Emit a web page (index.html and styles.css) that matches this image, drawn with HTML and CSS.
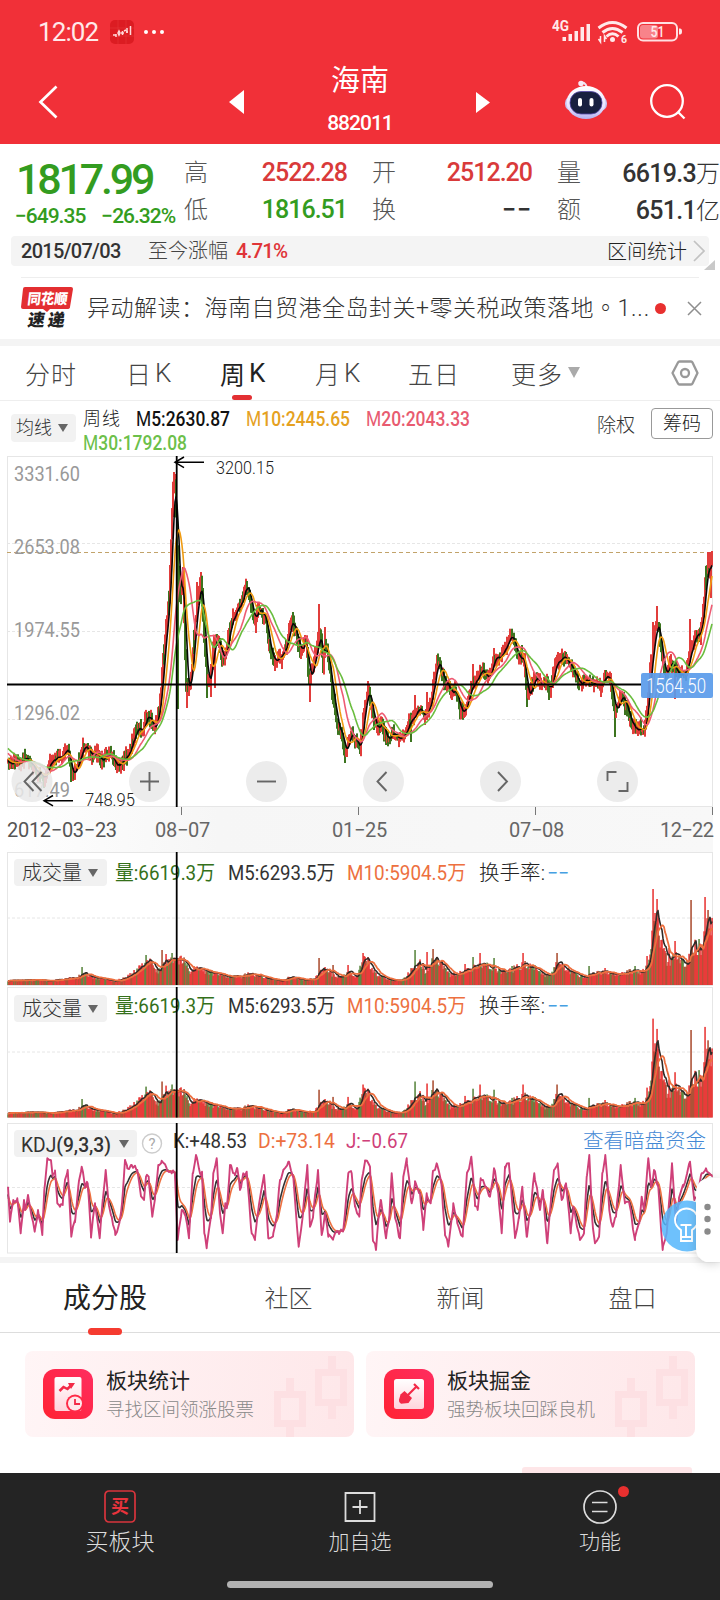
FILE: index.html
```html
<!DOCTYPE html>
<html lang="zh-CN">
<head>
<meta charset="utf-8">
<title>海南 882011</title>
<link rel="stylesheet" href="styles.css">
</head>
<body>
<header class="header">
  <div class="status">
    <span class="clock">12:02</span>
    <svg class="app" width="24" height="24" viewBox="0 0 24 24"><rect width="24" height="24" rx="5" fill="#dc1c22"/><path d="M0 8H24M0 16H24M8 0V24M16 0V24" stroke="#e8363a" stroke-width=".6"/><path d="M3 15h3M6 14v3M8 13l1-2 1 2-1 2zM11 13h3M12.500 11v4M14 11l2-1M17 8v5M16 12h2M20.500 6v9" stroke="#ffd9d9" stroke-width="1.500" fill="none"/></svg>
    <svg width="22" height="6" viewBox="0 0 22 6" fill="#fff"><circle cx="3" cy="3" r="2"/><circle cx="11" cy="3" r="2"/><circle cx="19" cy="3" r="2"/></svg>
    <svg class="signals" width="132" height="26" viewBox="0 0 132 26" fill="#ffe9ea">
      <text class="num" x="0" y="12" font-size="14" font-weight="700" textLength="17" lengthAdjust="spacingAndGlyphs">4G</text>
      <rect x="10.500" y="18" width="3.500" height="4"/><rect x="16.500" y="15" width="3.500" height="7"/><rect x="22.500" y="12" width="3.500" height="10"/><rect x="28.500" y="8" width="3.500" height="14"/><rect x="34.500" y="5" width="3.500" height="17"/>
      <g fill="none" stroke="#ffe9ea" stroke-width="3"><path d="M46.500 9Q60.500-2 74.500 9"/><path d="M50.500 13.500Q60.500 5.500 70.500 13.500"/><path d="M54.500 17.500Q60.500 12 66.500 17.500"/></g>
      <circle cx="60.500" cy="20.500" r="2.500"/><path d="M48.500 17v6l-2-3M52.500 23v-6l2 3" fill="none" stroke="#ffe9ea" stroke-width="1.500"/>
      <text class="num" x="69" y="24" font-size="10.500" font-weight="700">6</text>
      <rect x="86" y="4" width="39" height="17.500" rx="5" fill="none" stroke="#ffe0e2" stroke-width="2"/><rect x="88" y="6" width="18" height="13.500" rx="3" fill="#f8838a"/><path d="M127 9.500h1q2 0 2 3t-2 3h-1z"/>
      <text class="num" x="98.500" y="18" font-size="15" font-weight="500" textLength="14" lengthAdjust="spacingAndGlyphs">51</text>
    </svg>
  </div>
  <nav class="nav">
    <svg class="back" width="20" height="34" viewBox="0 0 20 34"><path d="M18.500 1.500L2.500 17L18.500 32.500" fill="none" stroke="#fff" stroke-width="2.700"/></svg>
    <svg width="15" height="24" viewBox="0 0 15 24"><path d="M0 12L15 0V24z" fill="#fff"/></svg>
    <div class="title"><b>海南</b><span>882011</span></div>
    <svg width="14" height="21" viewBox="0 0 14 21"><path d="M0 0L14 10.500L0 21z" fill="#fff"/></svg>
    <svg class="robot" width="42" height="40" viewBox="0 0 42 40">
      <defs><linearGradient id="shell" x2="0" y2="1"><stop offset="0" stop-color="#fff"/><stop offset=".65" stop-color="#e8e2ff"/><stop offset="1" stop-color="#b3b2f0"/></linearGradient></defs>
      <path d="M14 3.500q6-3 8 4" fill="none" stroke="#efe4f3" stroke-width="2"/><circle cx="16" cy="3.500" r="2.700" fill="#f7e9f6"/>
      <rect x="0" y="16" width="42" height="15" rx="7" fill="#c9c4f2"/><ellipse cx="21" cy="22.500" rx="19.500" ry="16.500" fill="url(#shell)"/>
      <rect x="5" y="11.500" width="32" height="22.500" rx="11" fill="#18203f" stroke="#5549a8" stroke-width=".8"/><rect x="13" y="18" width="4" height="8.500" rx="2" fill="#fff"/><rect x="24.500" y="18" width="4" height="8.500" rx="2" fill="#fff"/>
    </svg>
    <svg class="search" width="36" height="36" viewBox="0 0 36 36" fill="none" stroke="#fff" stroke-width="2.300"><circle cx="17" cy="17" r="15.800"/><path d="M28 28l6.500 6.500"/></svg>
  </nav>
</header>

<section class="quote">
  <div class="last"><strong>1817.99</strong><p><span>−649.35</span><span>−26.32%</span></p></div>
  <dl>
    <div><dt>高</dt><dd class="up">2522.28</dd></div><div><dt>开</dt><dd class="up">2512.20</dd></div><div class="wide"><dt>量</dt><dd>6619.3<i>万</i></dd></div>
    <div><dt>低</dt><dd class="down">1816.51</dd></div><div><dt>换</dt><dd class="dash">−−</dd></div><div class="wide"><dt>额</dt><dd>651.1<i>亿</i></dd></div>
  </dl>
</section>

<section class="range">
  <span class="date">2015/07/03</span><span class="since">至今涨幅</span><span class="gain">4.71%</span><span class="stat">区间统计</span>
  <svg width="12" height="22" viewBox="0 0 12 22"><path d="M1 1l10 10L1 21" fill="none" stroke="#c2c2c2" stroke-width="1.700"/></svg>
  <i class="corner"></i>
</section>

<section class="news">
  <svg width="53" height="44" viewBox="0 0 53 44">
    <path d="M4 1H50q2 0 2 2l-3 18q0 2-3 2H29l-3 3-4-3H2q-2 0-2-2L2 3q0-2 2-2z" fill="#e32e31"/>
    <text class="cjk" transform="translate(6 17.500) skewX(-7)" font-size="14.500" font-weight="900" fill="#fff" textLength="40" lengthAdjust="spacingAndGlyphs">同花顺</text>
    <text class="cjk" transform="translate(6 40) skewX(-9)" font-size="17" font-weight="900" fill="#222" textLength="37" lengthAdjust="spacing">速递</text>
  </svg>
  <p>异动解读：海南自贸港全岛封关+零关税政策落地<span class="stop" lang="zh-TW">。</span><span class="tail">1...</span></p>
  <i class="dot"></i>
  <svg class="close" width="15" height="15" viewBox="0 0 15 15"><path d="M1 1l13 13M14 1L1 14" stroke="#8e8e8e" stroke-width="1.500"/></svg>
</section>

<nav class="periods">
  <span>分时</span><span>日<em>K</em></span><span class="on">周<em>K</em></span><span>月<em>K</em></span><span>五日</span><span class="more">更多<i></i></span>
  <svg width="28" height="26" viewBox="0 0 28 26" fill="none" stroke="#999" stroke-width="2.300" stroke-linejoin="round"><path d="M8.500 1.500h11.500q1 0 1.500 1L26.500 13l-5 10.500q-.5 1-1.500 1H8.500q-1 0-1.500-1L1.500 13L7 2.500q.5-1 1.500-1z"/><circle cx="14" cy="13" r="4"/></svg>
</nav>

<section class="legend">
  <button class="pick">均线<i></i></button>
  <svg width="400" height="56" viewBox="0 0 400 56" class="num" font-size="20" font-weight="500">
    <text class="cjk" x="0" y="23.500" font-size="18" font-weight="300" fill="#222" textLength="37">周线</text>
    <text x="53" y="25" fill="#111" textLength="94" lengthAdjust="spacingAndGlyphs"><tspan font-weight="400">M</tspan>5:2630.87</text>
    <text x="163" y="25" fill="#e5a11f" textLength="104" lengthAdjust="spacingAndGlyphs"><tspan font-weight="400">M</tspan>10:2445.65</text>
    <text x="283" y="25" fill="#e85b70" textLength="104" lengthAdjust="spacingAndGlyphs"><tspan font-weight="400">M</tspan>20:2043.33</text>
    <text x="0" y="49" fill="#6cc04a" textLength="104" lengthAdjust="spacingAndGlyphs"><tspan font-weight="400">M</tspan>30:1792.08</text>
  </svg>
  <span class="adjust">除权</span><button class="chips">筹码</button>
</section>

<section class="charts">
  <svg id="price" width="706" height="351" viewBox="7 456 706 351"></svg>
  <div class="axis"><span class="first">2012−03−23</span><span>08−07</span><span>01−25</span><span>07−08</span><span>12−22</span><i></i><i></i><i></i><i></i></div>
  <svg id="vol1" width="706" height="134" viewBox="7 851.500 706 134"></svg>
  <svg id="vol2" width="706" height="131" viewBox="7 986.500 706 131"></svg>
  <svg id="kdj" width="706" height="131" viewBox="7 1123 706 131"></svg>
  <svg class="float" width="86" height="112" viewBox="0 0 86 112">
    <defs><filter id="shade" x="-50%" y="-30%" width="200%" height="160%"><feDropShadow dx="0" dy="2" stdDeviation="5" flood-color="#000" flood-opacity=".16"/></filter></defs>
    <circle cx="53" cy="61" r="25.500" fill="#55b6fb" fill-opacity=".85"/>
    <g fill="none" stroke="#fff" stroke-width="1.900"><path d="M47 68v-3q-6-4-6-10a11.500 11.500 0 0 1 23 0q0 6-6 10v3M47 67v9h11v-9M47 72h11M46.500 60h11M52 60v12"/></g>
    <path filter="url(#shade)" d="M86 13H74q-12 2-12 16v54q0 10 10 14h14z" fill="#fff"/>
    <g fill="#8a8a8a"><circle cx="73.500" cy="42" r="3.200"/><circle cx="73.500" cy="54" r="3.200"/><circle cx="73.500" cy="66.500" r="3.200"/></g>
  </svg>
</section>

<nav class="tabs"><span class="on">成分股</span><span>社区</span><span>新闻</span><span>盘口</span></nav>

<section class="cards">
  <article>
    <svg class="deco" width="82" height="86" viewBox="0 0 82 86"><g fill="none" stroke="#fde0e3" stroke-width="7"><path d="M5.500 43.500h25v29h-25zM46.500 21.500h25v30h-25z"/><path d="M18 72v14M18 27v16M60 5v16M60 52v16" stroke-width="8"/></g></svg>
    <svg width="50" height="50" viewBox="0 0 50 50"><defs><linearGradient id="red" x1="0" y1="1" x2="1" y2="0"><stop offset="0" stop-color="#ff2332"/><stop offset="1" stop-color="#ff2d60"/></linearGradient><linearGradient id="paper" x2="0" y2="1"><stop offset="0" stop-color="#fff"/><stop offset="1" stop-color="#ffd4dc"/></linearGradient></defs><rect width="50" height="50" rx="12" fill="url(#red)"/><rect x="11.500" y="8" width="27" height="34" rx="2" fill="url(#paper)"/><path d="M16.500 22l4-4 4 2 5-5" fill="none" stroke="#f32947" stroke-width="2.500"/><path d="M25 14h7l-4 6z" fill="#f32947"/><circle cx="32" cy="34.500" r="9" fill="#ff2947"/><circle cx="32" cy="34.500" r="7" fill="#ffe7eb"/><path d="M32 30v5h5" fill="none" stroke="#f32947" stroke-width="1.800"/></svg>
    <div><h3>板块统计</h3><p>寻找区间领涨股票</p></div>
  </article>
  <article>
    <svg class="deco" width="82" height="86" viewBox="0 0 82 86"><g fill="none" stroke="#fde0e3" stroke-width="7"><path d="M5.500 43.500h25v29h-25zM46.500 21.500h25v30h-25z"/><path d="M18 72v14M18 27v16M60 5v16M60 52v16" stroke-width="8"/></g></svg>
    <svg width="50" height="50" viewBox="0 0 50 50"><rect width="50" height="50" rx="12" fill="url(#red)"/><rect x="10" y="10" width="30" height="30" rx="2.500" fill="url(#paper)"/><path d="M22 28L32.500 17.500M30 15l5 5" stroke="#f32947" stroke-width="2.200" fill="none"/><path d="M16.500 25.500l4-3.500 7.500 7-3.500 5-7.500.8q-2.500-1.500-2-4z" fill="#f32947"/></svg>
    <div><h3>板块掘金</h3><p>强势板块回踩良机</p></div>
  </article>
</section>
<i class="peek"></i>

<footer class="bottom">
  <a><svg width="32" height="34" viewBox="0 0 32 34"><rect x="1" y="1" width="30" height="31" rx="4" fill="none" stroke="#d8343c" stroke-width="1.700"/><text class="cjk" x="16" y="23" text-anchor="middle" font-size="18" font-weight="700" fill="#e8333c">买</text></svg><span class="buy">买板块</span></a>
  <a><svg width="32" height="34" viewBox="0 0 32 34" fill="none" stroke="#dcdcdc" stroke-width="1.800"><path d="M1.500 3h29v28h-29zM16 10v14M8.500 17h15"/></svg><span>加自选</span></a>
  <a><svg width="34" height="34" viewBox="0 0 34 34" fill="none" stroke="#dcdcdc" stroke-width="1.700"><circle cx="17" cy="17" r="16"/><path d="M9 12.500h15.500M9 21.500h15.500"/></svg><span>功能</span><i class="dot"></i></a>
  <i class="home"></i>
</footer>
<script src="charts.js"></script>
</body>
</html>
```

FILE: styles.css
```css
* { box-sizing: border-box; margin: 0; padding: 0; }
body { width: 720px; height: 1600px; overflow: hidden; background: #fff; font-family: Roboto, "Noto Sans CJK SC", sans-serif; font-weight: 300; color: #333; position: relative; }
i, em { font-style: normal; }
svg { display: block; flex: none; }
button { font: inherit; border: 0; }
.num { font-family: Roboto, "Noto Sans CJK SC", sans-serif; }
.cjk { font-family: "Noto Sans CJK SC", sans-serif; }

.header { height: 144px; background: #f13038; color: #fff; }
.status { height: 62px; display: flex; align-items: center; padding: 1px 36px 0 38px; }
.clock { font-size: 26px; font-weight: 400; letter-spacing: -.9px; width: 72px; color: #ffe9ea; }
.app { margin-right: 9px; }
.signals { margin-left: auto; margin-right: 0; }
.nav { height: 82px; display: grid; grid-template-columns: 229px 15px 232px 14px 75px 42px 43px 36px; align-items: center; }
.nav > svg { margin-top: -2px; }
.nav .back { margin-left: 38px; }
.nav .robot { grid-column: 6; margin-top: -6px; }
.nav .search { grid-column: 8; }
.title { display: flex; flex-direction: column; align-items: center; }
.title b { font-size: 29px; line-height: 38px; font-weight: 400; margin-top: -6px; }
.title span { font-size: 21px; line-height: 30px; font-weight: 500; letter-spacing: -1px; margin-top: 8px; }

.quote { height: 92px; display: flex; }
.last { width: 184px; padding: 10px 0 0 16px; color: #339c20; }
.last strong { display: block; font-size: 43px; line-height: 50px; font-weight: 500; letter-spacing: -3.200px; }
.last p { display: flex; gap: 16px; font-size: 21px; line-height: 24px; font-weight: 500; letter-spacing: -1px; white-space: nowrap; margin-left: -1px; }
dl { display: grid; grid-template-columns: 163px 160px 163px; column-gap: 25px; grid-auto-rows: 37px; padding-top: 9px; }
dl div { display: flex; justify-content: space-between; align-items: center; }
dt { font-size: 24px; color: #555; margin-top: -2px; }
dd { font-size: 25px; font-weight: 500; letter-spacing: -1px; padding-top: 2px; }
dd i { font-size: 24px; font-weight: 300; letter-spacing: 0; }
.wide dd { letter-spacing: -.7px; margin-top: -2px; }
.up { color: #d93a3a; }
.down { color: #339c20; }
.dash { letter-spacing: 1px; }

.range { position: relative; height: 30px; margin: 0 11px; background: #f4f4f4; border-radius: 4px; display: flex; align-items: center; padding: 0 4px 0 10px; font-size: 20px; }
.date { font-size: 20px; font-weight: 500; letter-spacing: -.7px; width: 127px; }
.since { color: #444; width: 88px; margin-top: -3px; }
.gain { font-size: 20.500px; font-weight: 500; color: #e03438; letter-spacing: -.9px; }
.stat { margin-left: auto; margin-right: 6px; margin-top: -1px; color: #222; }
.corner { position: absolute; right: -6px; bottom: -4px; border-left: 11px solid transparent; border-bottom: 10px solid #c9c9c9; }

.news { height: 62px; margin: 11px 21px 0; border-top: 1px solid #eee; display: flex; align-items: center; }
.news p { flex: none; font-size: 23px; letter-spacing: .5px; margin-left: 13px; white-space: nowrap; width: 561px; line-height: 34px; margin-top: -2px; }
.news svg { margin-top: -1px; }
.stop { font-family: "Noto Sans CJK TC", sans-serif; }
.tail { letter-spacing: .8px; }
.dot { flex: none; width: 11px; height: 11px; border-radius: 50%; background: #e8302f; }
.news .dot { margin-left: 7px; }
.news .close { margin-left: 21px; }

.periods { height: 62px; border-top: 7px solid #f4f4f4; border-bottom: 1px solid #eee; padding-left: 25px; display: grid; grid-template-columns: 101px 94px 95px 93px 103px 160px 28px; align-items: center; font-size: 25px; color: #444; letter-spacing: 1px; }
.periods span { position: relative; display: flex; align-items: center; height: 54px; padding-bottom: 1px; }
.periods em { font-size: 26px; margin-left: 3px; }
.periods .on { color: #222; font-weight: 400; }
.periods .on::after { content: ""; position: absolute; left: 12px; bottom: 0; width: 20px; height: 5px; border-radius: 3px; background: #e33033; }
.more i { margin-left: 5px; border: 6.500px solid transparent; border-top: 11px solid #aaa; border-bottom: 0; }

.legend { height: 55px; display: flex; padding: 0 7px 0 11px; }
.pick { width: 65px; height: 28px; margin: 13px 7px 0 0; border-radius: 4px; background: #f2f2f2; font-size: 18px; line-height: 26px; color: #333; display: flex; align-items: center; padding-left: 5px; }
.pick i { margin-left: 6px; border: 5.500px solid transparent; border-top: 8px solid #666; border-bottom: 0; }
.adjust { margin-left: auto; font-size: 19px; line-height: 49px; margin-right: 16px; }
.legend svg { width: 400px; }
.chips { width: 62px; height: 31px; margin-top: 7px; background: #fff; border: 1px solid #999; border-radius: 4px; font-size: 19px; line-height: 26px; color: #222; }

.charts { position: relative; padding: 0 7px; height: 801px; }
.charts > svg { overflow: hidden; }
.axis { height: 44.500px; position: relative; background: linear-gradient(90deg, #fff, #f6f6f6 30%, #f8f8f8); display: grid; grid-template-columns: 148px 177px 177px 151px 53px; padding-top: 11px; font-size: 20px; font-weight: 400; color: #666; letter-spacing: -.3px; white-space: nowrap; }
.axis span:last-of-type { letter-spacing: -.6px; }
.axis .first { color: #555; }
.axis i { position: absolute; top: 0; width: 1px; height: 8px; background: #777; left: 174px; }
.axis i:nth-of-type(2) { left: 351px; }
.axis i:nth-of-type(3) { left: 528px; }
.axis i:nth-of-type(4) { left: 705px; }
#vol2 { margin-top: 1px; }
#kdj { margin-top: 5.500px; }
.float { position: absolute; left: 634px; top: 709px; }

.tabs { height: 76px; border-top: 6px solid #f4f4f4; border-bottom: 1px solid #ddd; display: grid; grid-template-columns: 210px 157px 187px 157px; font-size: 24px; text-align: center; color: #444; line-height: 72px; }
.tabs .on { position: relative; font-size: 28px; line-height: 71px; font-weight: 400; color: #222; }
.tabs .on::after { content: ""; position: absolute; left: 88px; bottom: 0; width: 34px; height: 7px; border-radius: 4px; background: #f53b30; }

.cards { display: flex; gap: 12px; padding: 18px 25px 0; }
.cards article { position: relative; height: 86px; flex: 1; border-radius: 8px; background: linear-gradient(100deg, #fff5f6, #fee7e9); display: flex; align-items: center; padding-left: 18px; gap: 13px; }
.cards h3 { font-size: 21px; line-height: 30px; font-weight: 400; color: #222; padding-top: 1px; }
.cards p { font-size: 18.500px; line-height: 28px; color: #888; }
.deco { position: absolute; right: 0; top: 0; }
.peek { position: absolute; left: 522px; top: 1467px; width: 170px; height: 8px; background: #fee6e8; border-radius: 3px; }

.bottom { position: absolute; left: 0; top: 1473px; width: 720px; height: 127px; background: #242424; display: grid; grid-template-columns: repeat(3, 1fr); color: #dcdcdc; }
.bottom a { position: relative; display: flex; flex-direction: column; align-items: center; padding-top: 17px; font-size: 21px; line-height: 37px; }
.bottom .buy { font-size: 23px; }
.bottom .dot { position: absolute; left: 138px; top: 13px; }
.home { position: absolute; left: 227px; top: 108px; width: 266px; height: 7px; border-radius: 4px; background: #b2b2b2; }
```

FILE: charts.js
```js
const STEP = 1, X0 = 8, COUNT = 705;
let seed = 7;
const rnd = () => (seed = (seed * 16807) % 2147483647) / 2147483647;
const pairs = s => s.trim().split(/\s+/).map(p => p.split(',').map(Number));
const at = (a, x) => {
  if (x <= a[0][0]) return a[0][1];
  for (let i = 1; i < a.length; i++) if (x <= a[i][0]) {
    const [p, q] = [a[i - 1], a[i]];
    return p[1] + (q[1] - p[1]) * (x - p[0]) / (q[0] - p[0]);
  }
  return a[a.length - 1][1];
};
const xs = Array.from({ length: COUNT }, (_, i) => X0 + i * STEP);
const avg = (v, n) => v.map((_, i) => { const w = v.slice(Math.max(0, i - n + 1), i + 1); return w.reduce((a, b) => a + b, 0) / w.length; });
const line = (v, c, w = 1.6) => `<polyline fill="none" stroke="${c}" stroke-width="${w}" stroke-linejoin="round" points="${v.map((y, i) => xs[i] + ',' + y.toFixed(1)).join(' ')}"/>`;
const bar = (x, y1, y2, c, w) => `<rect x="${(x - w / 2).toFixed(1)}" y="${y1.toFixed(1)}" width="${w}" height="${Math.max(1, y2 - y1).toFixed(1)}" fill="${c}"/>`;
const txt = (x, y, s, c, size, len, weight = 400) => `<text class="num" x="${x}" y="${y}" fill="${c}" font-size="${size}" font-weight="${weight}" textLength="${len}" lengthAdjust="spacingAndGlyphs">${s}</text>`;
const grid = y => `<path d="M7 ${y}H713" stroke="#e6e6e6" stroke-dasharray="3 2"/>`;
const frame = (y, h) => `<rect x="7.5" y="${y}" width="705" height="${h}" fill="#fff" stroke="#e6e6e6"/>`;

const close = pairs(`7,762 10,765 15,760 20,763 26,757 30,762 36,770 44,780 48,765 55,759 62,756 68,749 71,774 76,768 80,755 83,747 88,749
92,757 97,753 101,763 105,752 110,757 116,766 122,762 128,754 134,735 138,729 142,731 147,716 150,718 154,727 158,715 161,690 163,660 166,625 169,598
171,540 173,490 175,478 177,550 180,600 183,580 186,685 189,690 192,665 195,620 198,600 201,580 204,640 207,682 211,670 214,640 218,640 222,662 226,653
230,625 234,614 240,605 246,585 250,600 254,620 258,612 265,615 270,650 274,662 280,655 286,645 292,617 296,635 300,650 306,640 309,680 313,668 316,650
320,632 323,666 325,642 328,660 332,690 337,725 342,735 345,753 348,740 351,734 356,742 360,748 364,710 368,688 374,720 378,728 382,722 386,740 390,735
394,735 400,742 406,730 410,719 416,712 420,708 425,720 430,705 433,690 437,660 440,668 444,680 450,692 455,690 460,709 464,710 470,690 474,682 480,672
486,674 490,676 494,657 500,658 505,647 511,634 516,652 520,658 524,663 527,698 531,690 535,678 540,684 545,682 550,688 555,666 560,658 565,657 570,665
575,675 580,683 585,681 590,680 595,684 600,687 605,676 610,681 615,712 619,700 622,693 626,708 631,724 636,731 640,728 645,728 647,710 650,670 655,630
658,625 661,650 665,675 670,662 675,668 680,677 685,673 690,655 692,645 695,636 700,635 704,600 706,565 709,572 713,556`);
const highs = pairs('68,745 88,743 106,747 148,712 174,472 175,474 183,567 197,582 201,572 203,588 217,634 247,581 293,612 319,604 325,627 368,681 415,695 427,692 437,655 473,664 494,648 511,629 522,645 558,652 565,651 606,670 653,622 654,630 657,606 659,622 690,619 708,552 710,552 712,551');
const lows = pairs('44,788 71,782 101,768 116,770 154,730 178,709 187,708 189,696 207,698 211,697 215,688 256,633 275,671 282,669 301,659 310,702 323,673 345,763 360,754 386,745 411,742 464,718 527,707 549,700 601,697 615,737 625,715 638,736 643,735 675,699 701,645 711,598');
const near = (list, x) => { const p = list.find(q => Math.abs(q[0] - x) < .51); return p && p[1]; };

function price() {
  const v = xs.map(x => at(close, x) + (rnd() - .5) * 7);
  let s = frame(456.5, 350) + [543.5, 631.5, 719.5].map(grid).join('') + '<path d="M7 552.5H713" stroke="#c2a36a" stroke-dasharray="4 3"/>';
  [['3331.60', 481], ['2653.08', 554], ['1974.55', 637], ['1296.02', 720], ['617.49', 797]].forEach(([t, y]) => s += txt(14, y, t, '#999', 21, t.length > 6 ? 66 : 56));
  xs.forEach((x, i) => {
    const prev = i ? v[i - 1] : v[0];
    const green = rnd() < .8 ? v[i] > prev + 1 : rnd() < .3;
    const c = green ? '#3c741f' : '#e13d3b';
    const hi = near(highs, x) || Math.min(v[i], prev) - rnd() * 8;
    const lo = near(lows, x) || Math.max(v[i], prev) + rnd() * 8;
    s += bar(x, hi, lo, c, 2);
  });
  const early = Array.from({ length: 30 }, (_, i) => 733 + i);
  const full = early.concat(v), cut = n => avg(full, n).slice(30);
  s += line(cut(5), '#080808', 1.6) + line(cut(10), '#f09c13') + line(cut(20), '#ee5b73') + line(cut(30), '#69bd3e');
  s += '<path d="M7 684.5H641M176.700 456V807" stroke="#000" stroke-width="1.800"/>';
  s += '<path d="M175 462.300h29M184 457l-9 5.300 9 5.300M44 800.700h29M53 795.500l-9 5.200 9 5.200" fill="none" stroke="#000" stroke-width="1.500"/>';
  s += '<rect x="641" y="673" width="72" height="25" rx="2" fill="#5a9bea" fill-opacity=".92"/>' + txt(646, 693, '1564.50', '#fff', 20, 60, 300);
  s += txt(216, 474, '3200.15', '#222', 19, 58, 300) + txt(85, 805.5, '748.95', '#222', 18, 50, 300);
  [[32, 'M33.500 772l-9 9.500 9 9.500M41.500 772l-9 9.500 9 9.500'], [149.500, 'M140 781.500h19M149.500 772v19'], [266.500, 'M257 781.500h19'], [383.500, 'M386.500 772l-9 9.500 9 9.500'], [500.500, 'M498 772l9 9.500-9 9.500'], [617.500, 'M607.500 781v-9h9M618.500 791h9v-9']]
    .forEach(([x, d]) => s += `<circle cx="${x}" cy="781.500" r="20.500" fill="#e9e9e9" fill-opacity=".86"/><path d="${d}" fill="none" stroke="#666" stroke-width="1.900"/>`);
  document.getElementById('price').innerHTML = s;
}

const volume = pairs(`7,4 30,5 50,4 65,6 78,7 82,13 90,9 100,6 115,4 122,6 135,12 142,20 146,26 152,20 158,12 164,23 172,27 178,26 184,23 190,14 195,17
205,14 215,11 225,9 240,8 250,11 262,9 280,4 292,8 305,5 315,6 320,14 325,15 333,10 340,8 348,13 356,8 363,24 368,23 376,10 390,5 402,5 412,15 420,24
426,12 432,23 437,26 443,20 450,10 458,11 465,14 475,17 480,19 490,18 500,14 515,16 523,20 535,18 545,10 552,11 557,21 562,18 570,13 585,8 600,12 610,12
620,11 630,13 640,13 648,18 652,50 656,66 660,45 664,32 668,20 675,28 680,25 685,20 690,30 695,40 700,34 703,45 706,66 709,70 713,55`);
const spikes = pairs('82,18 134,15 146,30 162,35 166,31 172,32 319,27 325,18 333,20 348,20 363,32 368,28 415,35 427,33 433,36 437,28 465,21 473,28 480,32 494,27 523,32 557,32 589,19 605,17 635,19 647,29 653,96 655,72 657,86 669,37 675,44 691,85 699,46 705,88 708,75');

function volumes(id, base, scale, top, h, gridY) {
  seed = 91;
  const v = xs.map(x => { const b = at(volume, x); return (near(spikes, x) || b * (.78 + rnd() * .45)) * scale; });
  let s = frame(top + .5, h) + grid(gridY);
  xs.forEach((x, i) => {
    const r = rnd();
    s += bar(x, base - v[i], base, r < .55 ? '#e8302e' : r < .78 ? '#a8492c' : '#548238', 1.5);
  });
  s += line(avg(v, 6).map(y => base - y), '#322b27') + line(avg(v, 12).map(y => base - y), '#ed7040', 1.8);
  const b = top + (id === 'vol1' ? 7 : 8), t = b + (id === 'vol1' ? 21 : 17.5);
  s += `<rect x="14" y="${b}" width="93" height="27" rx="4" fill="#f1f1f1"/>` + txt(22, b + 20.500, '成交量', '#333', 20, 60, 300);
  s += `<path d="M88 ${b + 10}h10l-5 8z" fill="#666"/>`;
  s += txt(115, t, '量:6619.3万', '#34701a', 20, 100) + txt(228, t, 'M5:6293.5万', '#333', 20, 107) + txt(347, t, 'M10:5904.5万', '#ed7040', 20, 119) + txt(479, t, '换手率:', '#222', 20, 66, 300) + txt(547, t, '−−', '#469fe2', 20, 22);
  s += `<path d="M176.700 ${top}V${base}" stroke="#000" stroke-width="1.800"/>`;
  document.getElementById(id).innerHTML = s;
}

const jLeft = pairs(`24,1040 30,1145 40,1080 52,1075 62,1180 72,1080 76,1110 84,1065 95,1130 104,1175 114,1110 127,1185 133,1050 142,955 152,960 158,1010 165,1000
172,1090 180,1100 188,1095 195,1020 203,990 214,1190 225,1140 235,1040 245,980 255,1040 263,1030 273,1185 285,1090 299,1195 308,1080 317,990 325,1080 335,1130 346,1185
358,1150 366,1090 375,960 382,985 395,975 412,990 424,1070 432,1080 438,1010 446,1010 457,1130 466,1060 475,975 485,962 500,985 515,1000 525,1000 533,1200 545,1110
555,1125 567,1195 578,1000 588,945 600,1000 606,995 613,1180 620,1225 633,1130 640,1000 650,955 660,1120 668,1180 676,1090 680,1105 690,975 703,1000 712,985 720,1050
730,1000 740,995 755,1180 765,1200 775,1110 792,1005 805,1195 820,1180 832,1110 840,1020 850,990 865,965 880,1010 896,1220 908,1130 922,975 930,1160 940,1120 954,990
965,1185 975,1120 985,1190 1000,1195 1015,1175 1030,1170 1045,1000 1055,1000 1065,1100 1078,1130`);
const jRight = pairs(`5,1020 15,965 30,980 38,1190 48,1230 55,1140 62,1080 78,1195 88,1130 95,1000 105,1130 120,1195 130,1010 140,955 155,1090 165,1030 180,1060
190,1170 200,1060 212,1090 218,1000 230,970 245,1040 255,1180 265,1220 280,1090 292,1150 308,1190 320,1010 334,950 345,1090 353,1110 362,1015 378,1040 390,1070 402,985
415,1060 425,1180 435,980 447,970 455,1070 465,1190 477,1130 487,1040 500,1190 512,1110 523,1000 540,1110 548,1050 562,1210 573,1080 582,990 593,970 605,1080 618,1030
632,1180 640,1100 660,1200 672,1180 680,1010 688,945 697,1140 705,1210 718,1180 727,1000 736,945 748,1110 758,1160 768,1130 782,975 795,1090 808,1090 825,1200 838,1150
845,1070 852,1110 865,955 874,1040 882,990 895,1040 908,1230 920,1180 936,970 948,1150 957,1080 970,1040 990,965 1003,1080 1015,1060 1025,1000 1038,985 1058,1010`);

function kdj() {
  const pts = jLeft.concat(jRight.map(([x, y]) => [x + 1080, y])).map(([x, y]) => [x / 3, 840 + y / 3]);
  const j = xs.map(x => at(pts, x));
  const k = [], d = [];
  let last = 1200;
  j.forEach(y => { const kk = (3 * y + 4 * last) / 7; last = last * 2 / 3 + kk / 3; k.push(kk); d.push(last); });
  const mid = xs.map((x, i) => [x, j[i] + (rnd() - .5) * 6]).filter((_, i) => i % 2);
  const jl = `<polyline fill="none" stroke="#cf4079" stroke-width="1.900" stroke-linejoin="round" points="${[...pts, ...mid].sort((a, b) => a[0] - b[0]).map(p => p.map(n => n.toFixed(1)).join(',')).join(' ')}"/>`;
  let s = frame(1123.5, 129.5) + grid(1187.5) + line(k, '#333') + line(d, '#ed7040') + jl;
  s += '<rect x="14" y="1130" width="123" height="27" rx="4" fill="#f1f1f1"/>' + txt(21, 1151.5, 'KDJ<tspan font-weight="500">(9,3,3)</tspan>', '#333', 20, 90);
  s += '<path d="M119 1140h10l-5 8z" fill="#666"/><circle cx="152" cy="1143.500" r="9.500" fill="#fff" stroke="#ccc" stroke-width="1.400"/>' + txt(148.500, 1149, '?', '#aaa', 15, 7);
  s += txt(173, 1148, 'K:+48.53', '#333', 20, 74) + txt(258, 1148, 'D:+73.14', '#ed7040', 20, 77) + txt(346, 1148, 'J:−0.67', '#cf4079', 20, 62) + txt(583, 1147.5, '查看暗盘资金', '#4489d5', 20, 123, 300);
  s += '<path d="M176.700 1123V1253" stroke="#000" stroke-width="1.800"/>';
  document.getElementById('kdj').innerHTML = s;
}

price();
volumes('vol1', 984.5, 1, 851.5, 133, 917.5);
volumes('vol2', 1117, 1.03, 986.5, 130.5, 1051.5);
kdj();
```
